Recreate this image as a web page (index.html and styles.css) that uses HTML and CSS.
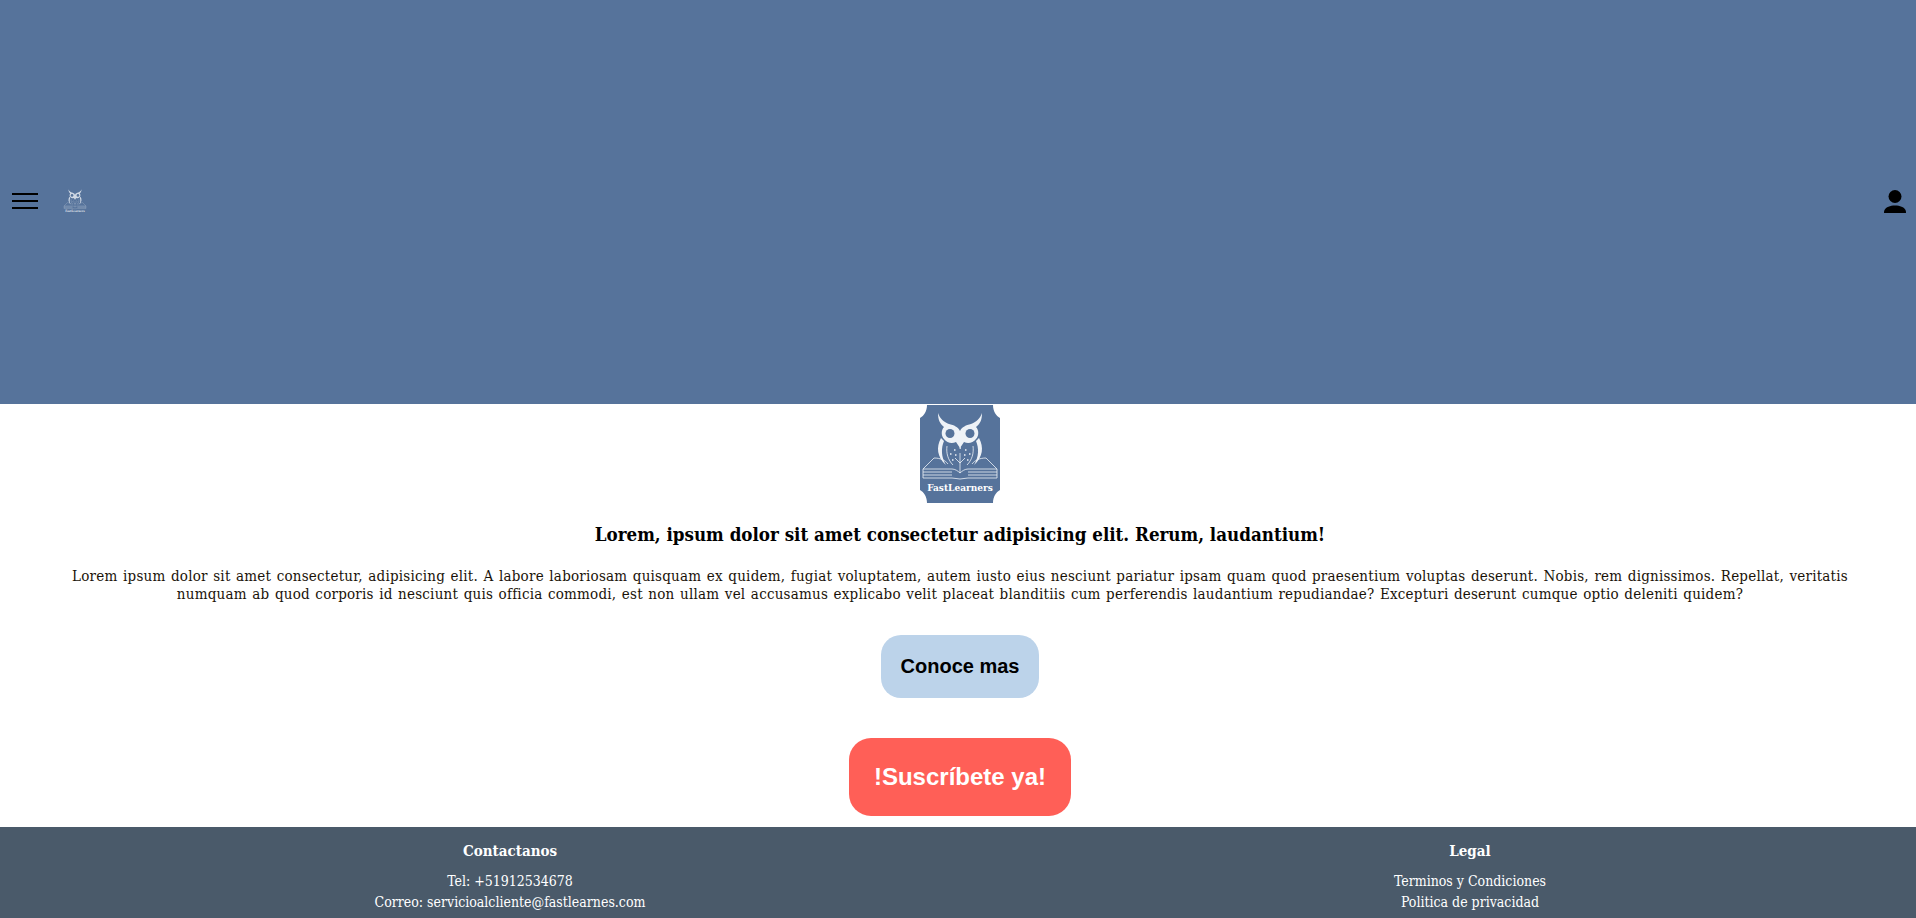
FILE: index.html
```html
<!DOCTYPE html>
<html lang="es">
<head>
<meta charset="utf-8">
<title>FastLearners</title>
<link rel="stylesheet" href="styles.css">
</head>
<body>
<header class="header">
  <div class="header-left">
    <svg class="menu-icon" viewBox="0 0 26 16" aria-hidden="true"><path d="M0 1h26M0 8h26M0 15h26"/></svg>
    <svg class="logo-small" viewBox="0 0 80 98" aria-hidden="true"><use href="#owl"/><text class="badge-text" x="40" y="86" text-anchor="middle">FastLearners</text></svg>
  </div>
  <svg class="user-icon" viewBox="0 0 22 23" aria-hidden="true"><circle cx="11" cy="6.500" r="6.500"/><path d="M0 23c0-1 0-2 .5-3C2 17 6 15.500 11 15.500s9 1.500 10.500 4.500c.5 1 .5 2 .5 3z"/></svg>
</header>
<main class="main">
  <svg class="logo-big" viewBox="0 0 80 98" role="img" aria-label="FastLearners">
    <defs>
      <g id="owl">
        <path class="owl-fill" d="M18 8c2 6 6 9 11 11 5 1 9 3 11 7 2-4 6-6 11-7 5-2 9-5 11-11 0 7-2 11-6 14 3 3 3 9 0 12-3 4-8 5-12 3l-4 6-4-6c-4 2-9 1-12-3-3-3-3-9 0-12-4-3-6-7-6-14z"/>
        <circle class="owl-eye" cx="30" cy="28.500" r="4.500"/>
        <circle class="owl-eye" cx="50" cy="28.500" r="4.500"/>
        <path class="owl-fill" d="M21 33c-5 9-4 19 5 27-5-8-5-17-2-24zM59 33c5 9 4 19-5 27 5-8 5-17 2-24z"/>
        <path class="owl-line" d="M27 41c-1 7 1 14 6 19M53 41c1 7-1 14-6 19M40 48v20M40 58l-5-5M40 58l5-5"/>
        <path class="owl-dots" d="M34 45h1.500M39.500 43h1.500M45 45h1.500M30 49h1.500M49 49h1.500M35 50h1.500M44 50h1.500M32 55h1.500M47 55h1.500"/>
        <path class="owl-line" d="M14 53L3 64M66 53l11 11M14 53c6 0 11 2 14 6M66 53c-6 0-11 2-14 6"/>
        <path class="owl-line" d="M3 64h29c3 0 6 2 8 4 2-2 5-4 8-4h29v9H48l-8 1-8-1H3zM3 67h29M3 70h29M48 67h29M48 70h29"/>
      </g>
    </defs>
    <path class="badge" d="M7 0h66c0 6 3 11 7 13v72c-4 2-7 7-7 13H7c0-6-3-11-7-13V13C4 11 7 6 7 0z"/>
    <use href="#owl"/>
    <text class="badge-text" x="40" y="86" text-anchor="middle">FastLearners</text>
  </svg>
  <h1 class="title">Lorem, ipsum dolor sit amet consectetur adipisicing elit. Rerum, laudantium!</h1>
  <p class="lead">Lorem ipsum dolor sit amet consectetur, adipisicing elit. A labore laboriosam quisquam ex quidem, fugiat voluptatem, autem iusto eius nesciunt pariatur ipsam quam quod praesentium voluptas deserunt. Nobis, rem dignissimos. Repellat, veritatis numquam ab quod corporis id nesciunt quis officia commodi, est non ullam vel accusamus explicabo velit placeat blanditiis cum perferendis laudantium repudiandae? Excepturi deserunt cumque optio deleniti quidem?</p>
  <a class="btn btn-more">Conoce mas</a>
  <a class="btn btn-sub">!Suscríbete ya!</a>
</main>
<footer class="footer">
  <div class="foot-col">
    <h2 class="foot-title">Contactanos</h2>
    <p class="foot-line">Tel: +51912534678</p>
    <p class="foot-line">Correo: servicioalcliente@fastlearnes.com</p>
  </div>
  <div class="foot-col">
    <h2 class="foot-title">Legal</h2>
    <p class="foot-line">Terminos y Condiciones</p>
    <p class="foot-line">Politica de privacidad</p>
  </div>
</footer>
</body>
</html>
```
FILE: styles.css
```css
* { box-sizing: border-box; }
html, body { margin: 0; height: 918px; overflow: hidden; }
body { font-family: "DejaVu Serif Condensed", "DejaVu Serif", serif; background: #fff; color: #000; display: flex; flex-direction: column; }

.header { height: 404px; flex: none; background: #56739b; display: flex; align-items: center; justify-content: space-between; padding: 0 10px 2px 12px; }
.header-left { display: flex; align-items: center; gap: 25px; }
.menu-icon { width: 26px; height: 16px; stroke: #000; stroke-width: 2; fill: none; }
.logo-small { width: 24px; height: 29px; opacity: .8; }
.user-icon { width: 22px; height: 23px; fill: #000; }

.main { flex: none; height: 423px; display: flex; flex-direction: column; align-items: center; padding-left: 4px; }
.logo-big { width: 80px; height: 98px; flex: none; margin-top: 1px; }
.badge { fill: #56739b; }
.owl-fill { fill: #eef2f7; }
.owl-eye { fill: #56739b; }
.owl-line { fill: none; stroke: #eef2f7; stroke-width: .8; }
.owl-dots { fill: none; stroke: #eef2f7; stroke-width: 1.300; }
.badge-text { font-family: "DejaVu Serif Condensed", serif; font-weight: 700; font-size: 10px; fill: #fff; }

.title { margin: 20px 0 0; font-size: 18.600px; line-height: 24px; font-weight: 700; text-align: center; }
.lead { margin: 20px 0 0; padding: 0 60px; font-size: 15px; letter-spacing: .22px; word-spacing: 1px; line-height: 18px; text-align: center; color: #1a1208; }

.btn { display: flex; align-items: center; justify-content: center; font-family: "Liberation Sans", sans-serif; font-weight: 700; flex: none; }
.btn-more { margin-top: 32px; width: 158px; height: 63px; border-radius: 20px; background: #bcd3ea; color: #000; font-size: 20px; }
.btn-sub { margin-top: 40px; width: 222px; height: 78px; border-radius: 22px; background: #ff5f57; color: #fff; font-size: 24px; }

.footer { flex: 1; min-height: 0; background: #4a5a6a; color: #fff; display: grid; grid-template-columns: 960px 960px; padding-left: 30px; overflow: hidden; text-align: center; }
.foot-title { margin: 14px 0 0; font-size: 15px; line-height: 20px; font-weight: 700; }
.foot-line { margin: 0; font-size: 14px; line-height: 21px; }
.foot-title + .foot-line { margin-top: 10px; }
```
